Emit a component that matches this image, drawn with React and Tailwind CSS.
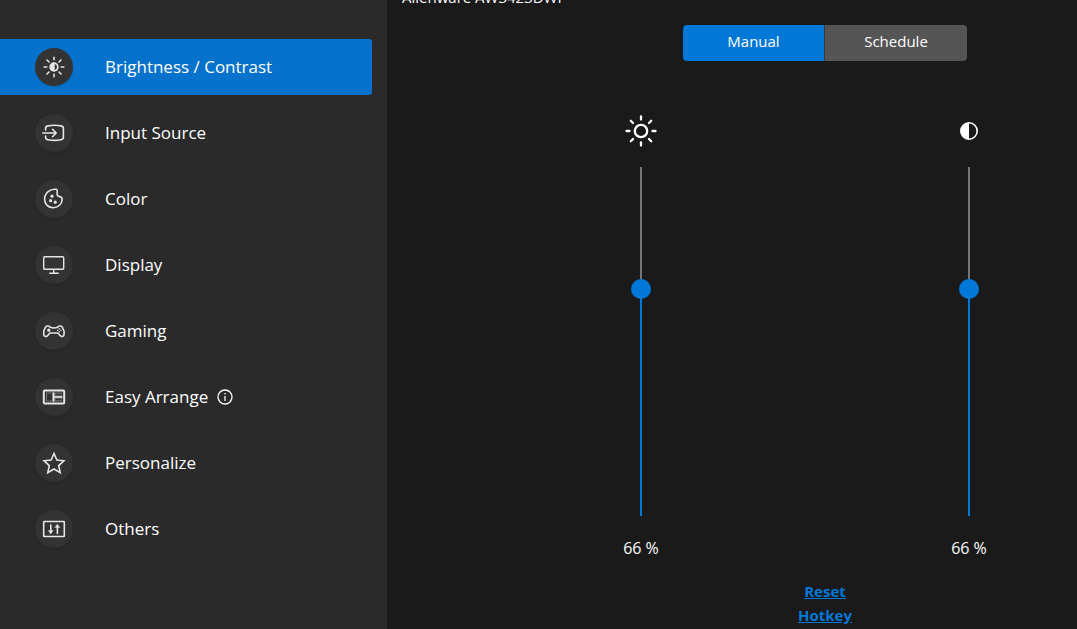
import { useState } from "react";
import clsx from "clsx";

const Icon = ({ children }) => (
  <svg
    viewBox="0 0 24 24"
    className="w-6 h-6"
    fill="none"
    stroke="currentColor"
    strokeWidth="1.6"
    strokeLinecap="round"
    strokeLinejoin="round"
    aria-hidden="true"
  >
    {children}
  </svg>
);

const BrightnessIcon = () => (
  <Icon>
    <path d="M12 2.200v2.600M12 19.200v2.600M2.200 12h2.600M19.200 12h2.600M5 5l2 2M17 17l2 2M5 19l2-2M17 7l2-2" />
    <circle cx="12" cy="12" r="4.700" fill="currentColor" stroke="none" />
    <path d="M12.700 9a3.100 3.100 0 0 1 0 6z" fill="#333333" stroke="none" />
  </Icon>
);

const InputIcon = () => (
  <Icon>
    <path d="M3.600 9V7.200C3.600 5.800 4.600 5.200 6 4.900c4-.8 9-.8 13 0 1.400.3 2.400 1 2.400 2.400v9c0 1.400-1 2.100-2.400 2.400-4 .8-9 .8-13 0-1.400-.3-2.400-.9-2.400-2.300V15" />
    <path d="M.8 12h13.200M10.500 8.300 14.200 12l-3.700 3.700" />
  </Icon>
);

const ColorIcon = () => (
  <Icon>
    <path d="M14.400 2.300C8 1.500 2.600 6 2.600 12.300c0 5 3.700 8.500 8.600 8.500 4.800 0 8.600-3.400 8.900-8 .1-1.900-.9-3-2.300-3.200-1.700-.3-2.700-.9-2.700-2.600 0-2 .6-4.400-.7-4.700z" />
    <g fill="currentColor" stroke="none">
      <circle cx="10" cy="9.200" r="1.600" />
      <circle cx="8.600" cy="13.700" r="1.600" />
      <circle cx="13.200" cy="15.200" r="1.600" />
    </g>
  </Icon>
);

const DisplayIcon = () => (
  <Icon>
    <rect x="1.700" y="3.700" width="20" height="12.600" rx="1" strokeWidth="1.400" />
    <path d="M11.700 16.500v3.700M7.700 20.300h8.600" strokeWidth="1.400" />
  </Icon>
);

const GamingIcon = () => (
  <Icon>
    <path d="M8.200 8.300c-.8-1.500-3.600-1.700-4.700-.2C2.300 10 1.400 12.500 1.700 15.200c.3 2.600 2.600 3 4 1.300l2.200-2.500h8l2.200 2.500c1.500 1.700 3.700 1.300 4-1.300.3-2.700-.6-5.200-1.800-7.100-1.100-1.500-3.900-1.300-4.700.2-1.600.6-5.800.6-7.400 0z" />
    <circle cx="6.800" cy="11.200" r="1.600" fill="currentColor" stroke="none" />
    <g fill="currentColor" stroke="none">
      <circle cx="17.300" cy="9.800" r=".8" />
      <circle cx="17.300" cy="12.800" r=".8" />
      <circle cx="15.700" cy="11.300" r=".8" />
      <circle cx="18.900" cy="11.300" r=".8" />
    </g>
  </Icon>
);

const ArrangeIcon = () => (
  <Icon>
    <rect x="1.800" y="5.500" width="20.400" height="13" rx="1" strokeWidth="2" />
    <rect x="4" y="7.500" width="16" height="9" stroke="none" fill="currentColor" fillOpacity=".35" />
    <rect x="5" y="8.500" width="5" height="7" stroke="none" fill="#333333" />
    <path d="M11.500 8v8M12 12h8" strokeWidth="1.600" />
    <path d="M13.500 9.500h6M13.500 14.500h6" stroke="#333333" strokeWidth="1.400" strokeLinecap="butt" />
  </Icon>
);

const StarIcon = () => (
  <Icon>
    <path
      d="M12 2.500l2.900 6.500 7 .8-5.200 4.800 1.500 7L12 18l-6.200 3.600 1.500-7L2.100 9.800l7-.8z"
      strokeLinejoin="miter"
    />
  </Icon>
);

const OthersIcon = () => (
  <Icon>
    <rect x="1.700" y="4.500" width="20.600" height="15" rx=".6" />
    <path d="M8.800 8v8M15.400 8.500v8" />
    <path d="M6.400 13.600h4.800l-2.400 3zM13 10.400h4.800l-2.400-3z" fill="currentColor" strokeWidth=".4" />
  </Icon>
);

const InfoIcon = () => (
  <svg viewBox="0 0 16 16" className="w-4 h-4" fill="none" stroke="currentColor" strokeWidth="1.300" aria-hidden="true">
    <circle cx="8" cy="8" r="7" />
    <path d="M8 7v5M8 4v1.500" />
  </svg>
);

const SunIcon = () => (
  <svg
    viewBox="0 0 32 32"
    className="w-8 h-8"
    fill="none"
    stroke="currentColor"
    strokeWidth="2.300"
    strokeLinecap="round"
    aria-hidden="true"
  >
    <circle cx="16" cy="16" r="6.200" />
    <path d="M16 1.500v3M16 27.500v3M1.500 16h3M27.500 16h3M5.800 5.800l2.200 2.200M24 24l2.200 2.200M5.800 26.200L8 24M24 8l2.200-2.200" />
  </svg>
);

const ContrastIcon = () => (
  <svg viewBox="0 0 18 18" className="w-[18px] h-[18px]" aria-hidden="true">
    <circle cx="9" cy="9" r="8.200" fill="none" stroke="currentColor" strokeWidth="1.600" />
    <path d="M9 1a8 8 0 0 0 0 16z" fill="currentColor" />
  </svg>
);

const menu = [
  { label: "Brightness / Contrast", icon: BrightnessIcon },
  { label: "Input Source", icon: InputIcon },
  { label: "Color", icon: ColorIcon },
  { label: "Display", icon: DisplayIcon },
  { label: "Gaming", icon: GamingIcon },
  { label: "Easy Arrange", icon: ArrangeIcon, info: true },
  { label: "Personalize", icon: StarIcon },
  { label: "Others", icon: OthersIcon },
];

const modes = ["Manual", "Schedule"];

const LevelSlider = ({ id, label, icon: LevelIcon, value, onChange }) => (
  <div className="w-20 flex flex-col items-center">
    <label htmlFor={id} aria-label={label} className="h-8 flex items-center">
      <LevelIcon />
    </label>
    <input
      id={id}
      type="range"
      min="0"
      max="100"
      value={value}
      onChange={(e) => onChange(Number(e.target.value))}
      style={{ "--level": `${value}%` }}
      className="mt-5 w-5 h-[349px] appearance-none bg-transparent cursor-pointer [writing-mode:vertical-lr] [direction:rtl] [&::-webkit-slider-runnable-track]:w-[2px] [&::-webkit-slider-runnable-track]:h-full [&::-webkit-slider-runnable-track]:bg-[linear-gradient(to_top,#0078d7_var(--level),#767676_var(--level))] [&::-webkit-slider-thumb]:appearance-none [&::-webkit-slider-thumb]:w-5 [&::-webkit-slider-thumb]:h-5 [&::-webkit-slider-thumb]:-ml-[9px] [&::-webkit-slider-thumb]:rounded-full [&::-webkit-slider-thumb]:bg-[#0078d7]"
    />
    <output htmlFor={id} className="mt-5 text-base leading-6">
      {value} %
    </output>
  </div>
);

function Sidebar({ active, onSelect }) {
  return (
    <nav className="w-[387px] shrink-0 bg-[#2a2a2a] pt-[39px] pr-[15px] pb-10">
      <ul className="flex flex-col gap-[10px]">
        {menu.map(({ label, icon: ItemIcon, info }) => (
          <li key={label}>
            <button
              type="button"
              onClick={() => onSelect(label)}
              className={clsx(
                "w-full h-14 pl-[35px] flex items-center rounded-r-[3px] text-left text-[17px]",
                active === label && "bg-[#0672cb]"
              )}
            >
              <span className="w-[38px] h-[38px] rounded-full bg-[#333333] shadow-sm flex items-center justify-center text-[#e6e6e6]">
                <ItemIcon />
              </span>
              <span className="ml-8">{label}</span>
              {info && (
                <span className="ml-[9px]">
                  <InfoIcon />
                </span>
              )}
            </button>
          </li>
        ))}
      </ul>
    </nav>
  );
}

function App() {
  const [active, setActive] = useState("Brightness / Contrast");
  const [mode, setMode] = useState("Manual");
  const [brightness, setBrightness] = useState(66);
  const [contrast, setContrast] = useState(66);

  return (
    <div className="min-h-screen flex overflow-hidden bg-[#1a1a1a] text-white font-['Open_Sans','Noto_Sans',sans-serif]">
      <Sidebar active={active} onSelect={setActive} />

      <main className="flex-1 min-w-0">
        <h1 className="-mt-[15px] ml-[15px] text-[15px] leading-6">Alienware AW3423DWF</h1>

        <div className="mt-4 pl-[186px] flex justify-center">
          <div className="flex rounded-[4px] overflow-hidden">
            {modes.map((name) => (
              <button
                key={name}
                type="button"
                aria-pressed={mode === name}
                onClick={() => setMode(name)}
                className={clsx(
                  "w-[142px] h-9 pb-1 text-[15px] border-[#3a3a3a] not-last:border-r",
                  mode === name ? "bg-[#0078d7]" : "bg-[#555555]"
                )}
              >
                {name}
              </button>
            ))}
          </div>
        </div>

        <div className="mt-[54px] pl-[214px] pr-[68px] flex justify-between">
          <LevelSlider
            id="brightness"
            label="Brightness"
            icon={SunIcon}
            value={brightness}
            onChange={setBrightness}
          />
          <LevelSlider
            id="contrast"
            label="Contrast"
            icon={ContrastIcon}
            value={contrast}
            onChange={setContrast}
          />
        </div>

        <div className="mt-[19px] pl-[186px] flex flex-col items-center text-[15px] leading-6 font-bold text-[#0078d7] underline">
          <a href="#reset">Reset</a>
          <a href="#hotkey">Hotkey</a>
        </div>
      </main>
    </div>
  );
}

export default App;
